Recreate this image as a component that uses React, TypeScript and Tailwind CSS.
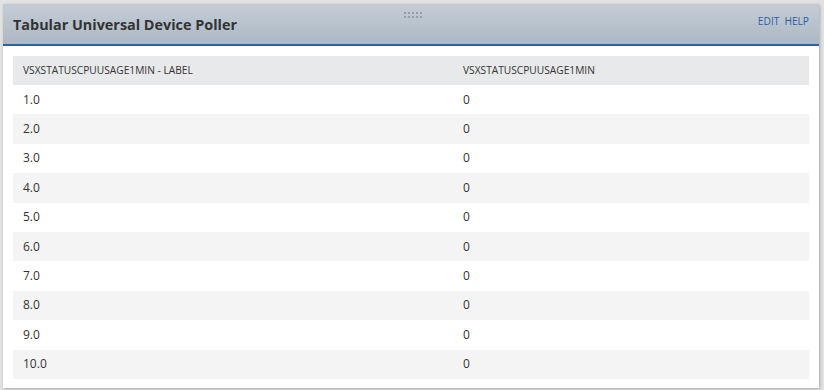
const rows = ["1.0", "2.0", "3.0", "4.0", "5.0", "6.0", "7.0", "8.0", "9.0", "10.0"];

function DragHandle() {
  return (
    <div className="absolute left-[401px] top-[8px] grid grid-cols-5 gap-[2px]">
      {Array.from({ length: 10 }).map((_, i) => (
        <span key={i} className="block h-[2px] w-[2px] bg-[#9a9fa6]" />
      ))}
    </div>
  );
}

export default function App() {
  return (
    <div className="h-[390px] w-[824px] bg-[#e2e2e2] pl-[3px] pr-[5px] pt-[4px] pb-[2px] font-['Open_Sans',sans-serif]">
      <div className="relative flex h-full flex-col bg-white shadow-[1px_1px_3px_rgba(0,0,0,0.25)]">
        <div className="flex h-[42px] shrink-0 items-center justify-between border-b-2 border-[#2d5ea6] bg-gradient-to-b from-[#c4cdd7] to-[#adb8c4] pl-[10px] pr-[10px]">
          <h1 className="mt-[1px] text-[14.4px] font-bold text-[#333]">Tabular Universal Device Poller</h1>
          <div className="-mt-[4px] flex gap-[5px] text-[10.2px] text-[#2d5ea6]">
            <span>EDIT</span>
            <span>HELP</span>
          </div>
        </div>
        <DragHandle />
        <div className="px-[10px] pt-[10px]">
          <div className="grid h-[29px] grid-cols-[440px_1fr] items-center bg-[#e8e9ea] text-[10.2px] text-[#333]">
            <span className="pl-[10px]">VSXSTATUSCPUUSAGE1MIN - LABEL</span>
            <span className="pl-[10px]">VSXSTATUSCPUUSAGE1MIN</span>
          </div>
          {rows.map((r, i) => (
            <div
              key={r}
              className={`grid h-[29.4px] grid-cols-[440px_1fr] items-center text-[12px] text-[#333] ${
                i % 2 === 1 ? "bg-[#f4f4f4]" : "bg-white"
              }`}
            >
              <span className="pl-[10px]">{r}</span>
              <span className="pl-[10px]">0</span>
            </div>
          ))}
        </div>
      </div>
    </div>
  );
}
